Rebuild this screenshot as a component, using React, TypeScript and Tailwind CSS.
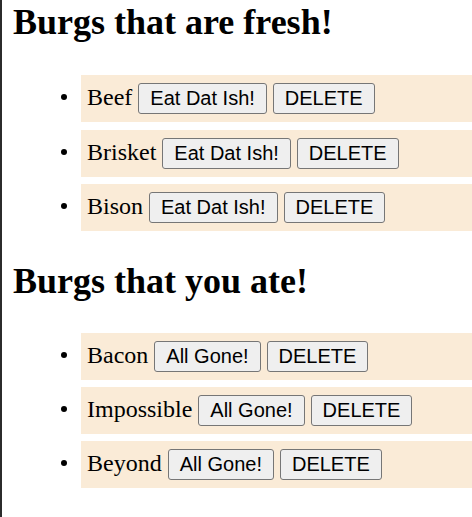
const fresh = ["Beef", "Brisket", "Bison"];
const eaten = ["Bacon", "Impossible", "Beyond"];

function BurgRow({ name, action }: { name: string; action: string }) {
  return (
    <li className="flex items-center">
      <span className="ml-[48px] mb-[3px] w-[6px] h-[6px] rounded-full bg-black shrink-0" />
      <div className="ml-[14px] flex-1 flex items-baseline gap-[6px] bg-[#faebd7] pl-[6px] py-[8px] text-[24px] leading-[normal] text-black">
        <span>{name}</span>
        <button className="h-[31px] px-[11px] py-[3px] border border-[#767676] rounded-[3px] bg-[#efefef] text-[20px] leading-[23px] font-['Liberation_Sans',Arial,sans-serif] text-black">
          {action}
        </button>
        <button className="h-[31px] px-[11px] py-[3px] border border-[#767676] rounded-[3px] bg-[#efefef] text-[20px] leading-[23px] font-['Liberation_Sans',Arial,sans-serif] text-black">
          DELETE
        </button>
      </div>
    </li>
  );
}

export default function App() {
  return (
    <div className="min-h-screen border-l-2 border-[#2b2b2b] bg-white pl-[11px] pt-[2px] font-['Liberation_Serif','Times_New_Roman',serif]">
      <h1 className="text-[36px] leading-[41px] font-bold mb-[32px]">Burgs that are fresh!</h1>
      <ul className="flex flex-col gap-[7.5px]">
        {fresh.map((b) => (
          <BurgRow key={b} name={b} action="Eat Dat Ish!" />
        ))}
      </ul>

      <h1 className="text-[36px] leading-[41px] font-bold mt-[30px] mb-[31px]">Burgs that you ate!</h1>
      <ul className="flex flex-col gap-[7px]">
        {eaten.map((b) => (
          <BurgRow key={b} name={b} action="All Gone!" />
        ))}
      </ul>
    </div>
  );
}
